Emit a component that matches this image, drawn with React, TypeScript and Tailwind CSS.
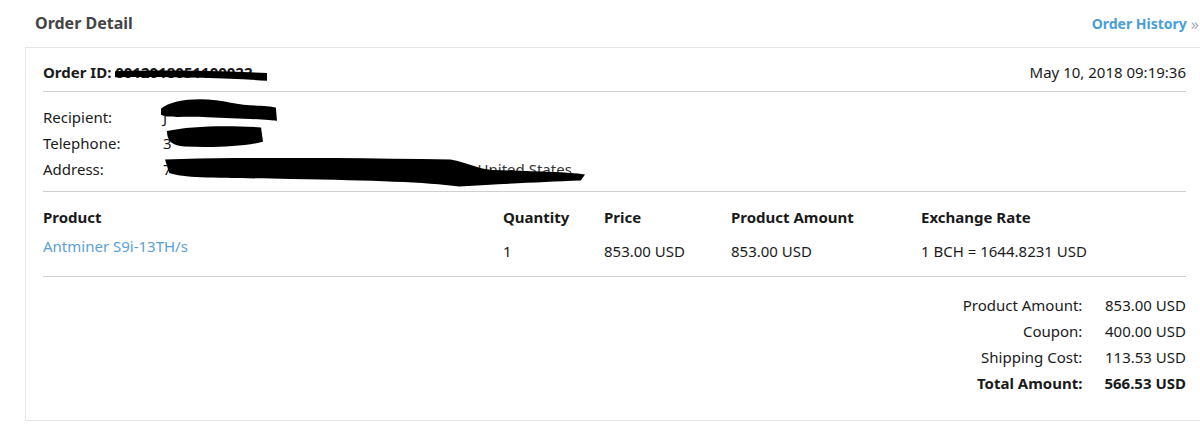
import React from 'react';

const font = { fontFamily: '"Noto Sans", "Open Sans", Arial, sans-serif' };

function Scribble({ className, d }: { className: string; d: string }) {
  return (
    <svg className={`pointer-events-none absolute ${className}`} viewBox="0 0 100 20" preserveAspectRatio="none">
      <path d={d} fill="#000" />
    </svg>
  );
}

const info = [
  { label: 'Recipient:', value: 'J', blob: 'left-[-2px] top-[-6px] h-[24px] w-[116px]', d: 'M0 9 C10 0 40 -1 60 4 C75 7 92 6 99 8 L100 19 C80 17 60 17 40 16 C20 15 5 17 0 14 Z' },
  { label: 'Telephone:', value: '3', blob: 'left-[2px] top-[-5px] h-[24px] w-[98px]', d: 'M2 5 C25 1 60 0 98 2 L100 14 C80 18 50 19 20 18 C8 17 2 14 2 5 Z' },
  { label: 'Address:', value: '7', blob: 'left-[2px] top-[2px] h-[30px] w-[420px]', d: 'M0 1 C20 -1 45 0 68 1 C72 3 74 7 78 8 C88 9 95 9 100 11 L99 15 C90 16 82 17 70 19 C62 16 50 15 30 14 C15 13 5 14 1 10 Z' },
];

export default function App() {
  return (
    <div className="w-[1200px] h-[428px] overflow-hidden bg-white text-[#1a1a1a]" style={font}>
      <div className="w-[1220px] pl-[25px]">
        {/* Header */}
        <div className="flex items-center justify-between h-[47px] pl-[10px] w-[1174px]">
          <h1 className="text-[16px] font-bold text-[#444] leading-[22px] -mt-[2px]">Order Detail</h1>
          <a className="flex items-center gap-[4px] text-[14px] font-bold text-[#4b9ed6] leading-[22px]">
            Order History
            <span className="font-normal text-[#aaa] text-[16px]">»</span>
          </a>
        </div>

        {/* Card */}
        <div className="w-[1180px] border border-[#e6e6e6] px-[17px] text-[15px]">
          <div className="flex justify-between border-b border-[#cfcfcf] pt-[13px] pb-[8px] leading-[22px] w-[1143px]">
            <div className="flex font-bold">
              <span>Order ID:&nbsp;</span>
              <span className="relative">
                0012018051100022
                <Scribble className="left-[0px] top-[9px] h-[12px] w-[152px]" d="M0 2 C30 0 60 1 100 5 L100 18 C70 13 40 11 0 12 Z" />
              </span>
            </div>
            <span>May 10, 2018 09:19:36</span>
          </div>

          <div className="border-b border-[#cfcfcf] pt-[12px] pb-[9px] w-[1143px]">
            {info.map((row) => (
              <div key={row.label} className="flex leading-[26px]">
                <span className="w-[120px]">{row.label}</span>
                <span className="relative">
                  {row.value}
                  {row.label === 'Address:' && <span className="ml-[306px] text-[#333]">United States</span>}
                  <Scribble className={row.blob} d={row.d} />
                </span>
              </div>
            ))}
          </div>

          <div className="border-b border-[#cfcfcf] pt-[14px] pb-[14px] w-[1143px]">
            <div className="grid grid-cols-[460px_101px_127px_190px_1fr] font-bold leading-[22px]">
              <span>Product</span>
              <span>Quantity</span>
              <span>Price</span>
              <span>Product Amount</span>
              <span>Exchange Rate</span>
            </div>
            <div className="grid grid-cols-[460px_101px_127px_190px_1fr] leading-[22px] mt-[12px]">
              <a className="text-[#5a9fd4] -mt-[5px]">Antminer S9i-13TH/s</a>
              <span>1</span>
              <span>853.00 USD</span>
              <span>853.00 USD</span>
              <span>1 BCH = 1644.8231 USD</span>
            </div>
          </div>

          <div className="flex justify-end pt-[15px] pb-[24px] w-[1143px]">
            <div className="grid grid-cols-[auto_auto] gap-x-[22px] leading-[26px]">
              <span className="text-right">Product Amount:</span>
              <span className="text-right">853.00 USD</span>
              <span className="text-right">Coupon:</span>
              <span className="text-right">400.00 USD</span>
              <span className="text-right">Shipping Cost:</span>
              <span className="text-right">113.53 USD</span>
              <span className="text-right font-bold">Total Amount:</span>
              <span className="text-right font-bold">566.53 USD</span>
            </div>
          </div>
        </div>
      </div>
    </div>
  );
}
